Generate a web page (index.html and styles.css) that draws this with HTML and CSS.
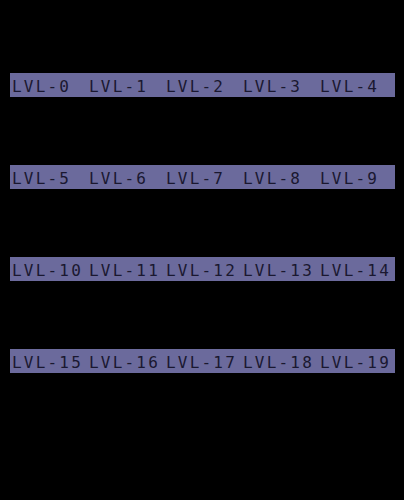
FILE: index.html
```html
<!DOCTYPE html>
<html lang="en">
<head>
  <meta charset="UTF-8">
  <meta name="viewport" content="width=device-width, initial-scale=1.0">
  <title>Level Select</title>
  <link rel="stylesheet" href="styles.css">
</head>
<body>
  <div class="levels">
    <div class="level-row">
      <div class="level">LVL-0</div>
      <div class="level">LVL-1</div>
      <div class="level">LVL-2</div>
      <div class="level">LVL-3</div>
      <div class="level">LVL-4</div>
    </div>
    <div class="level-row">
      <div class="level">LVL-5</div>
      <div class="level">LVL-6</div>
      <div class="level">LVL-7</div>
      <div class="level">LVL-8</div>
      <div class="level">LVL-9</div>
    </div>
    <div class="level-row">
      <div class="level">LVL-10</div>
      <div class="level">LVL-11</div>
      <div class="level">LVL-12</div>
      <div class="level">LVL-13</div>
      <div class="level">LVL-14</div>
    </div>
    <div class="level-row">
      <div class="level">LVL-15</div>
      <div class="level">LVL-16</div>
      <div class="level">LVL-17</div>
      <div class="level">LVL-18</div>
      <div class="level">LVL-19</div>
    </div>
  </div>
</body>
</html>
```

FILE: styles.css
```css
body {
  margin: 0;
  background-color: #000;
  font-family: 'DejaVu Sans Mono', 'Liberation Mono', monospace;
}
.levels {
  display: flex;
  flex-direction: column;
  gap: 68px;
  padding: 73px 0 0 10px;
}
.level-row {
  display: grid;
  grid-template-columns: repeat(5, 77px);
  width: 385px;
  height: 24px;
  background-color: #6b6a9c;
}
.level {
  padding: 4px 0 0 2px;
  font-size: 16px;
  line-height: 20px;
  letter-spacing: 2.2px;
  color: #1a1830;
  white-space: nowrap;
  overflow: hidden;
}
```
